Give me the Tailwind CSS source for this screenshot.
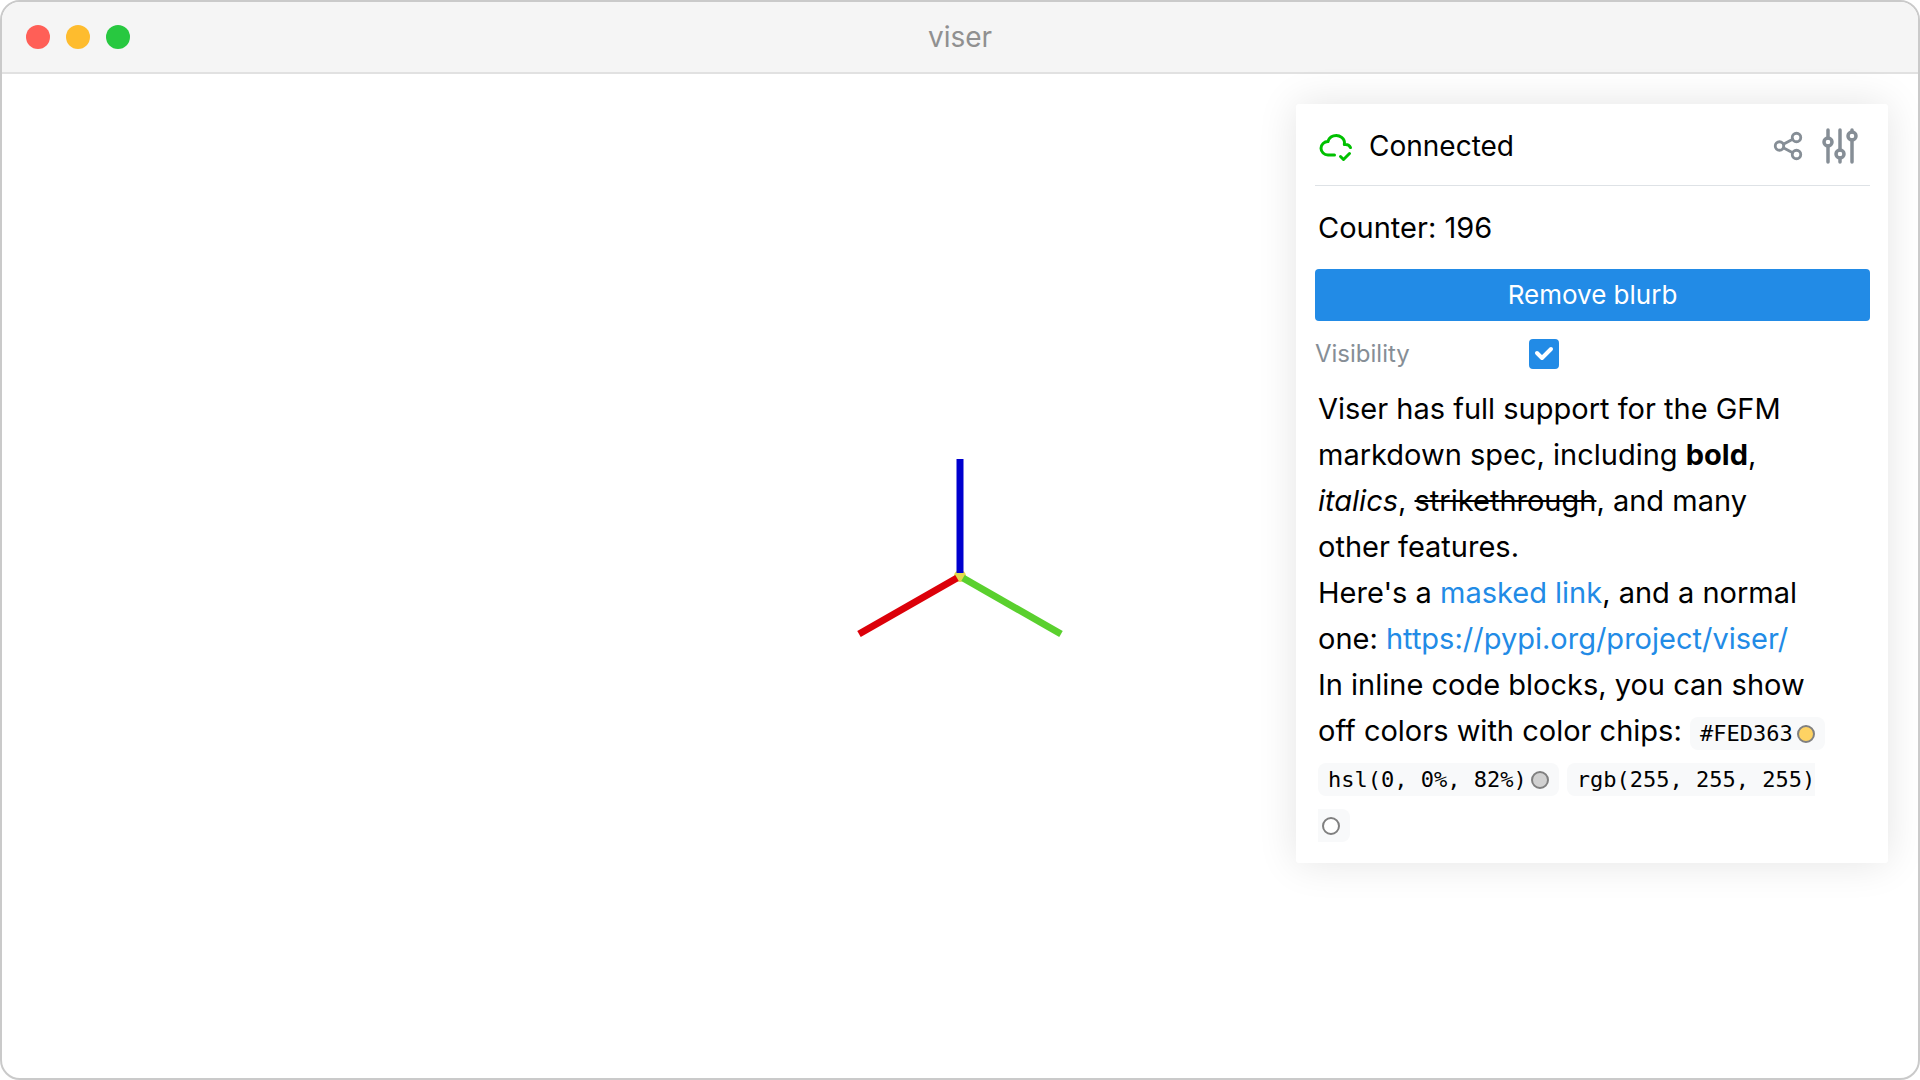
<!DOCTYPE html>
<html lang="en">
<head>
<meta charset="utf-8">
<title>viser</title>
<script src="https://cdn.jsdelivr.net/npm/@tailwindcss/browser@4"></script>
</head>
<body class="bg-white font-['Inter',sans-serif] text-black">
<div class="flex min-h-screen flex-col overflow-hidden rounded-[20px] border-2 border-[#cacaca] bg-white">
  <header class="grid h-18 grid-cols-3 items-center border-b-2 border-[#e1e1e1] bg-[#f5f5f5] px-6">
    <div class="flex gap-4">
      <span class="size-6 rounded-full bg-[#ff5f57]"></span>
      <span class="size-6 rounded-full bg-[#febc2e]"></span>
      <span class="size-6 rounded-full bg-[#28c840]"></span>
    </div>
    <h1 class="text-center text-[28px] leading-9 text-[#909090]">viser</h1>
  </header>

  <main class="relative flex flex-1 items-center justify-center">
    <svg class="h-[240px] w-[208px]" viewBox="-104 -120 208 240" role="img" aria-label="World axes">
      <circle r="6" fill="#e3d94f"/>
      <path d="M0-117V-3" stroke="#0000cf" stroke-width="7"/>
      <path d="M-3 2-101 58" stroke="#dc0009" stroke-width="7"/>
      <path d="M3 2 101 58" stroke="#5ad02e" stroke-width="7"/>
    </svg>

    <aside class="absolute top-[30px] right-[30px] w-[592px] rounded-[3px] bg-white pr-[18px] pl-[19px] shadow-[0_0_40px_rgba(0,0,0,0.11)]">
      <div class="flex h-[82px] items-center border-b border-[#dee2e6] pt-[3px] pr-[6px]">
        <svg class="ml-[3px] size-9" viewBox="0 0 24 24" fill="none" stroke="#00c000" stroke-width="2" stroke-linecap="round" stroke-linejoin="round"><path d="M11 18.004H6.657C4.085 18 2 15.993 2 13.517c0-2.475 2.085-4.482 4.657-4.482.393-1.762 1.794-3.2 3.675-3.773 1.88-.572 3.956-.193 5.444 1 1.488 1.19 2.162 3.007 1.77 4.769h.99c1.388 0 2.585.82 3.138 2.007"/><path d="m15 19 2 2 4-4"/></svg>
        <p class="ml-[15px] flex-1 text-[28px] leading-9">Connected</p>
        <div class="flex items-center gap-[11px]">
          <button type="button" aria-label="Share"><svg class="size-[34px]" viewBox="0 0 24 24" fill="none" stroke="#868e96" stroke-width="2" stroke-linecap="round" stroke-linejoin="round"><circle cx="6" cy="12" r="3"/><circle cx="18" cy="6" r="3"/><circle cx="18" cy="18" r="3"/><path d="m8.700 10.700 6.600-3.400M8.700 13.300l6.600 3.400"/></svg></button>
          <button type="button" aria-label="Configuration"><svg class="size-12" viewBox="0 0 24 24" fill="none" stroke="#868e96" stroke-width="1.75" stroke-linecap="round" stroke-linejoin="round"><circle cx="6" cy="10" r="2"/><path d="M6 4v4M6 12v8"/><circle cx="12" cy="16" r="2"/><path d="M12 4v10M12 18v2"/><circle cx="18" cy="7" r="2"/><path d="M18 4v1M18 9v11"/></svg></button>
        </div>
      </div>

      <p class="mt-[19px] px-[3px] text-[29px] leading-[46px]">Counter: 196</p>
      <button type="button" class="mt-[18px] h-[52px] w-full rounded-[4px] bg-[#228be6] text-[26px] leading-9 text-white">Remove blurb</button>

      <div class="mt-[18px] flex h-[30px] items-center">
        <label for="visibility" class="w-[214px] text-[24px] leading-[30px] text-[#868e96]">Visibility</label>
        <span class="relative flex size-[30px]">
          <input id="visibility" type="checkbox" checked class="size-[30px] appearance-none rounded-[4px] border-2 border-[#ced4da] checked:border-[#228be6] checked:bg-[#228be6]">
          <svg class="pointer-events-none absolute inset-0 size-[30px]" viewBox="0 0 30 30" fill="none" stroke="#fff" stroke-width="4" stroke-linecap="round" stroke-linejoin="round"><path d="m8 14 5 5 9-9"/></svg>
        </span>
      </div>

      <div class="mt-[17px] px-[3px] pb-[17px] text-[29px] leading-[46px]">
        <p>Viser has full support for the GFM<br>markdown spec, including <strong class="font-bold">bold</strong>,<br><em>italics</em>, <del>strikethrough</del>, and many<br>other features.</p>
        <p>Here's a <a href="#" class="text-[#228be6]">masked link</a>, and a normal<br>one: <a href="https://pypi.org/project/viser/" class="text-[#228be6]">https://pypi.org/project/viser/</a></p>
        <p>In inline code blocks, you can show<br>off colors with color chips:
          <code class="rounded-[8px] bg-[#f8f9fa] px-[10px] py-1 font-['DejaVu_Sans_Mono',monospace] text-[22px] leading-none">#FED363<span class="ml-1 inline-block size-[18px] rounded-full border-2 border-[#808080] bg-[#fed363] align-[-2px]"></span></code><br>
          <code class="rounded-[8px] bg-[#f8f9fa] px-[10px] py-1 font-['DejaVu_Sans_Mono',monospace] text-[22px] leading-none">hsl(0, 0%, 82%)<span class="ml-1 inline-block size-[18px] rounded-full border-2 border-[#808080] bg-[#d1d1d1] align-[-2px]"></span></code>
          <code class="rounded-[8px] bg-[#f8f9fa] px-[10px] py-1 font-['DejaVu_Sans_Mono',monospace] text-[22px] leading-none">rgb(255, 255, 255)<br><span class="ml-1 inline-block size-[18px] rounded-full border-2 border-[#808080] bg-white align-[-2px]"></span></code></p>
      </div>
    </aside>
  </main>
</div>
</body>
</html>
